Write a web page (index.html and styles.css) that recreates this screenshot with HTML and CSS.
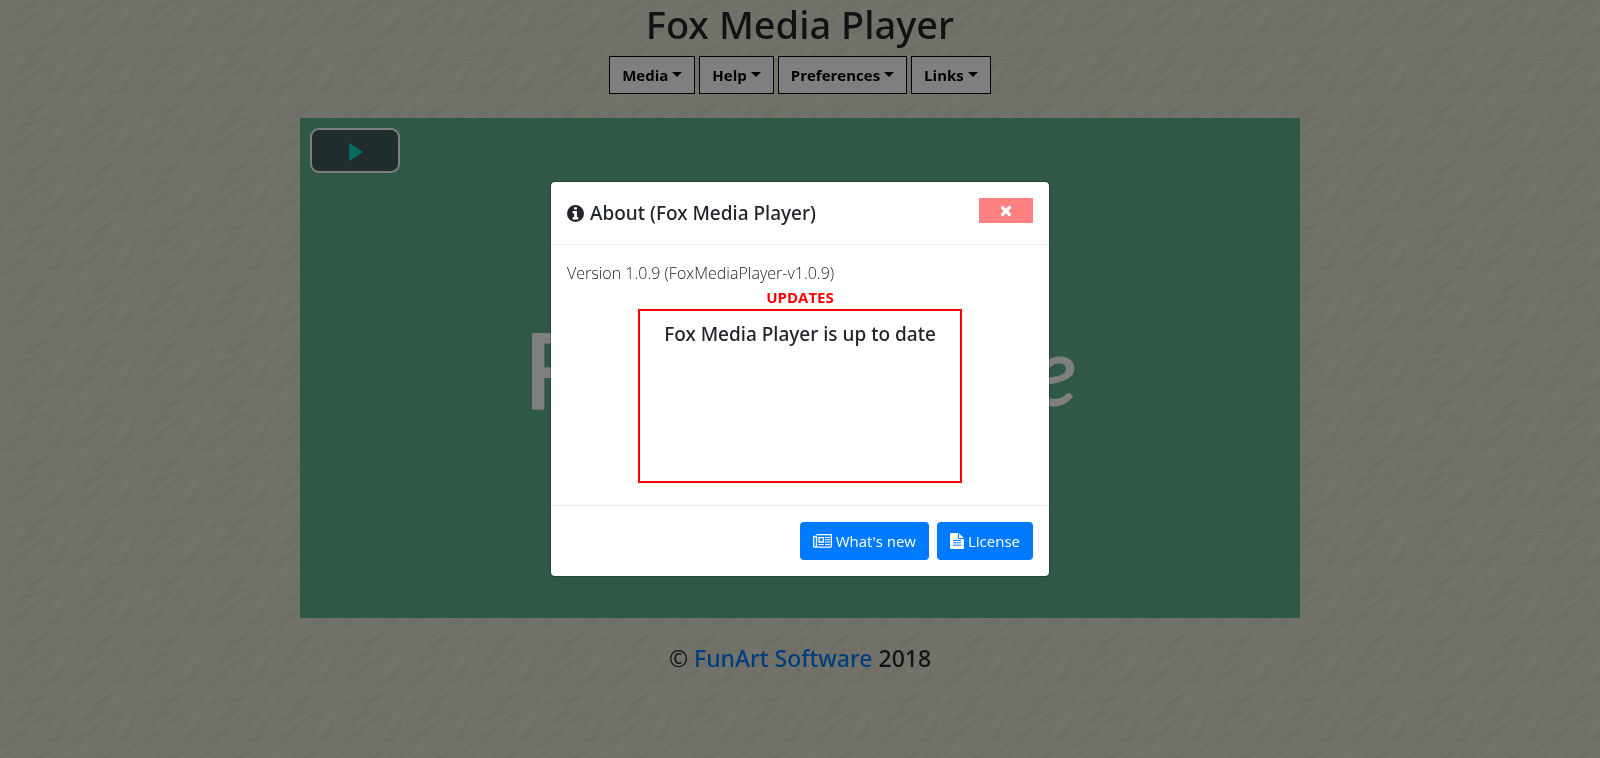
FILE: index.html
```html
<!DOCTYPE html>
<html lang="en">
<head>
<meta charset="utf-8">
<title>Fox Media Player</title>
<link rel="stylesheet" href="styles.css">
</head>
<body>
<svg class="texture" aria-hidden="true">
  <defs>
    <filter id="grain" x="0" y="0" width="100%" height="100%">
      <feTurbulence type="fractalNoise" baseFrequency="0.03 0.07" numOctaves="5" seed="8" result="n"/>
      <feDiffuseLighting in="n" surfaceScale="1.3" lighting-color="#ebe9d8">
        <feDistantLight azimuth="250" elevation="70"/>
      </feDiffuseLighting>
    </filter>
    <pattern id="stone" width="67" height="59" patternUnits="userSpaceOnUse">
      <rect x="-60" y="-60" width="190" height="190" transform="rotate(-32 33 30)" filter="url(#grain)"/>
    </pattern>
  </defs>
  <rect width="100%" height="100%" fill="url(#stone)"/>
</svg>
<main class="page">
  <h1 class="title">Fox Media Player</h1>
  <nav class="menu">
    <button class="menu-btn" type="button">Media</button>
    <button class="menu-btn" type="button">Help</button>
    <button class="menu-btn" type="button">Preferences</button>
    <button class="menu-btn" type="button">Links</button>
  </nav>
  <section class="player" aria-label="Video player">
    <button class="play" type="button" aria-label="Play">
      <svg width="16" height="20" viewBox="0 0 16 20"><path d="M2 2L16 11L2 20Z" fill="#12d8c4"/></svg>
    </button>
    <div class="poster"><span class="poster-first">F</span><span class="poster-last">e</span></div>
  </section>
  <footer class="credits"><span class="copy">©</span> <a href="#">FunArt Software</a> 2018</footer>
</main>
<div class="overlay">
  <div class="dialog" role="dialog" aria-modal="true" aria-labelledby="about-title">
    <header class="dialog-head">
      <h2 class="dialog-title" id="about-title">
        <svg width="17" height="17" viewBox="0 0 1536 1536"><path fill="currentColor" fill-rule="evenodd" d="M768 0a768 768 0 1 0 0 1536a768 768 0 1 0 0-1536zM1024 1120v160q0 14-9 23t-23 9H544q-14 0-23-9t-9-23v-160q0-14 9-23t23-9h96V768h-96q-14 0-23-9t-9-23V576q0-14 9-23t23-9h320q14 0 23 9t9 23v512h96q14 0 23 9t9 23zM896 224v160q0 14-9 23t-23 9H672q-14 0-23-9t-9-23V224q0-14 9-23t23-9h192q14 0 23 9t9 23z"/></svg>
        About (Fox Media Player)
      </h2>
      <button class="close" type="button" aria-label="Close">
        <svg width="12" height="12" viewBox="0 0 12 12"><path d="M2.5 2.5L9.5 9.5M9.5 2.5L2.5 9.5" stroke="#fff" stroke-width="3.2" stroke-linecap="round"/></svg>
      </button>
    </header>
    <div class="dialog-body">
      <p class="version">Version 1.0.9 (FoxMediaPlayer-v1.0.9)</p>
      <p class="updates">UPDATES</p>
      <div class="status">Fox Media Player is up to date</div>
    </div>
    <footer class="dialog-foot">
      <button class="btn" type="button">
        <svg width="19" height="14" viewBox="0 0 19 14" fill="none" stroke="#fff"><path d="M3.5 .7H18.3V12Q18.3 13.2 17 13.2H2Q.7 13.2 .7 12V2.5H3.5V11.5Q3.5 13 2.2 13" stroke-width="1.3"/><path d="M6 3.6H10.4V8H6Z" stroke-width="1.3"/><path d="M12 3.5H17M12 5.8H17M12 8H17M5.3 10.5H10.8M12 10.5H17" stroke-width="1.1"/></svg>
        What's new
      </button>
      <button class="btn" type="button">
        <svg width="14" height="16" viewBox="0 0 14 16"><path fill="#fff" d="M1 0H8V5Q8 6 9 6H14V15Q14 16 13 16H1Q0 16 0 15V1Q0 0 1 0ZM9 .2L13.8 5H9Z"/><path d="M3 7.5H11M3 9.8H11M3 12.2H11" stroke="#007bff"/></svg>
        License
      </button>
    </footer>
  </div>
</div>
</body>
</html>
```
FILE: styles.css
```css
* { box-sizing: border-box; }
body {
  margin: 0;
  min-height: 100vh;
  background: #dddbc9;
  color: #212529;
  font: 16px/24px "Open Sans", "Noto Sans", sans-serif;
}
h1, h2, p { margin: 0; }
button { font: inherit; cursor: pointer; }
.texture { position: fixed; inset: 0; width: 100%; height: 100%; z-index: -1; }
.page { display: flex; flex-direction: column; align-items: center; padding: 0 16px; }
.title, .credits, .dialog-title, .status { font-family: "Noto Sans", "Open Sans", sans-serif; font-weight: 500; }
.title { margin-bottom: 8px; font-size: 38px; line-height: 48px; }
.menu { display: flex; gap: 4px; margin-bottom: 24px; }
.menu-btn {
  display: flex;
  align-items: center;
  gap: 4px;
  height: 38px;
  padding: 0 12px;
  border: 1px solid #000;
  background: #fff;
  color: #000;
  font-size: 15px;
  font-weight: 700;
}
.menu-btn::after {
  content: "";
  margin-bottom: 1px;
  border: 5px solid transparent;
  border-top-color: #000;
  border-bottom: 0;
}
.player {
  display: flex;
  flex-direction: column;
  width: 100%;
  max-width: 1000px;
  aspect-ratio: 2;
  padding: 10px;
  background: #5eb08e;
}
.play {
  display: flex;
  align-items: center;
  justify-content: center;
  width: 90px;
  height: 45px;
  padding: 0;
  border: 2px solid #fff;
  border-radius: 9px;
  background: #3e5a58;
}
.poster {
  display: flex;
  justify-content: space-between;
  align-items: center;
  align-self: center;
  width: 556px;
  flex: 1;
  padding-bottom: 44px;
  color: #fff;
}
.poster-first { font: 600 106px/120px "Open Sans", sans-serif; }
.poster-last { font: italic 500 96px/120px Lato, sans-serif; }
.credits { margin-top: 24px; font-size: 23px; line-height: 32px; }
.copy { font-weight: 400; }
.credits a { color: #007bff; text-decoration: none; }
.overlay {
  position: fixed;
  inset: 0;
  display: flex;
  align-items: center;
  justify-content: center;
  background: rgba(0, 0, 0, .5);
}
.dialog {
  width: 500px;
  border: 1px solid rgba(0, 0, 0, .2);
  border-radius: 5px;
  background: #fff;
  background-clip: padding-box;
}
.dialog-head {
  display: flex;
  justify-content: space-between;
  align-items: flex-start;
  padding: 16px;
  border-bottom: 1px solid #e9ecef;
}
.dialog-title {
  display: flex;
  align-items: center;
  gap: 6px;
  font-size: 19px;
  line-height: 30px;
}
.close {
  display: flex;
  align-items: center;
  justify-content: center;
  width: 54px;
  height: 25px;
  padding: 0;
  border: 0;
  background: #ff8080;
}
.dialog-body { padding: 16px 16px 22px; }
.version { font-size: 16px; font-weight: 300; }
.updates { color: red; font-size: 15px; font-weight: 700; text-align: center; }
.status {
  width: 324px;
  min-height: 174px;
  margin: 0 auto;
  padding: 8px;
  border: 2px solid red;
  font-size: 19px;
  line-height: 30px;
  text-align: center;
}
.dialog-foot {
  display: flex;
  justify-content: flex-end;
  gap: 8px;
  padding: 16px;
  border-top: 1px solid #e9ecef;
}
.btn {
  display: flex;
  align-items: center;
  gap: 4px;
  height: 38px;
  padding: 0 13px;
  border: 0;
  border-radius: 4px;
  background: #007bff;
  color: #fff;
  font-size: 15px;
}
```
